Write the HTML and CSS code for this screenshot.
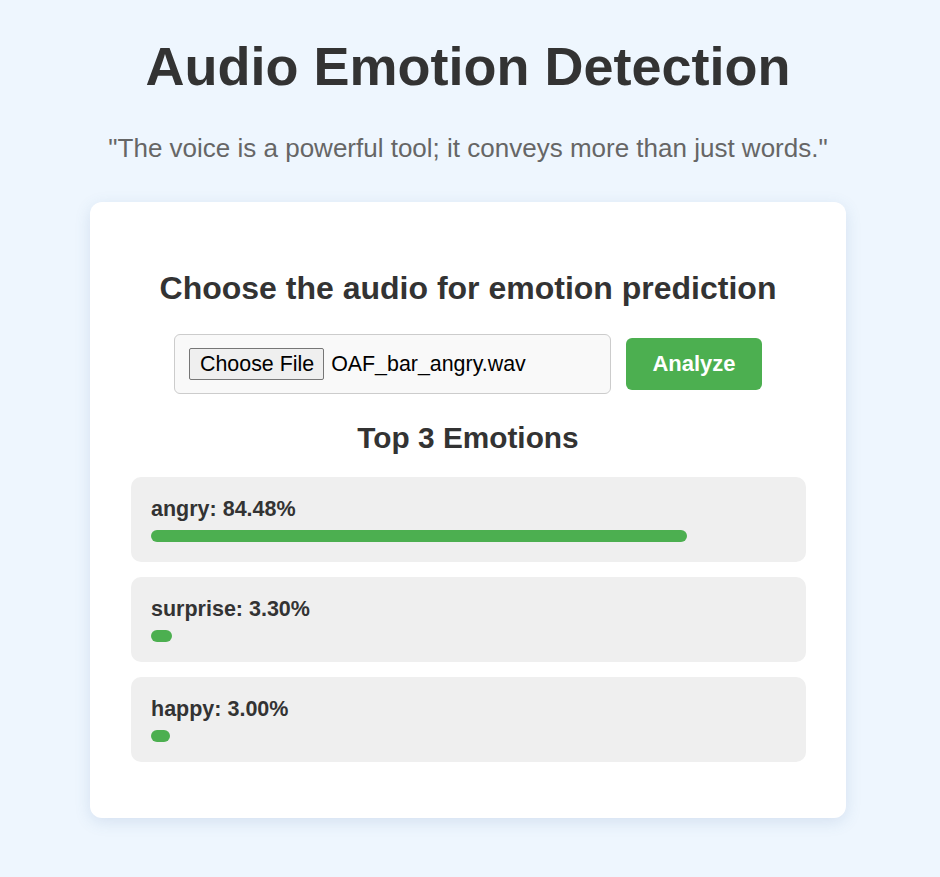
FILE: index.html
```html
<!DOCTYPE html>
<html lang="en">
<head>
<meta charset="utf-8">
<title>Audio Emotion Detection</title>
<link rel="stylesheet" href="styles.css">
</head>
<body>
  <h1 class="title">Audio Emotion Detection</h1>
  <p class="quote">"The voice is a powerful tool; it conveys more than just words."</p>
  <main class="card">
    <h2 class="card-heading">Choose the audio for emotion prediction</h2>
    <form class="upload-row">
      <div class="file-box">
        <span class="file-btn">Choose File</span>
        <span class="file-name">OAF_bar_angry.wav</span>
      </div>
      <button type="button" class="analyze-btn">Analyze</button>
    </form>
    <h3 class="results-heading">Top 3 Emotions</h3>
    <div class="results">
      <div class="emotion">
        <div class="emotion-label">angry: 84.48%</div>
        <div class="bar-track"><div class="bar" style="width:84.48%"></div></div>
      </div>
      <div class="emotion">
        <div class="emotion-label">surprise: 3.30%</div>
        <div class="bar-track"><div class="bar" style="width:3.30%"></div></div>
      </div>
      <div class="emotion">
        <div class="emotion-label">happy: 3.00%</div>
        <div class="bar-track"><div class="bar" style="width:3.00%"></div></div>
      </div>
    </div>
  </main>
</body>
</html>
```
FILE: styles.css
```css
* { box-sizing: border-box; }

body {
  margin: 0;
  padding: 0 94px 0 90px;
  background: #eef6fe;
  font-family: "Liberation Sans", Arial, sans-serif;
  color: #333;
  min-height: 877px;
}

.title {
  margin: 0;
  padding-top: 34px;
  font-size: 54px;
  font-weight: bold;
  text-align: center;
  color: #333;
  line-height: 64px;
}

.quote {
  margin: 35px 0 0;
  font-size: 26px;
  line-height: 30px;
  text-align: center;
  color: #666;
}

.card {
  margin-top: 39px;
  background: #fff;
  border-radius: 12px;
  box-shadow: 0 4px 16px rgba(70, 110, 160, 0.15);
  padding: 67px 40px 56px;
}

.card-heading {
  margin: 0;
  font-size: 32px;
  line-height: 38px;
  text-align: center;
}

.upload-row {
  margin: 27px 0 0;
  display: flex;
  justify-content: center;
  align-items: center;
  gap: 15px;
}

.file-box {
  width: 437px;
  height: 60px;
  border: 1px solid #ccc;
  border-radius: 6px;
  background: #f9f9f9;
  display: flex;
  align-items: center;
  padding: 0 14px;
  gap: 7px;
  font-size: 21.4px;
  color: #000;
}

.file-btn {
  display: inline-block;
  background: #efefef;
  border: 1px solid #767676;
  border-radius: 2px;
  padding: 3px 9px 3px 10px;
  font-size: 21.4px;
  line-height: 24px;
  color: #000;
}

.analyze-btn {
  width: 136px;
  height: 52px;
  border: none;
  border-radius: 6px;
  background: #4caf50;
  color: #fff;
  font-family: inherit;
  font-size: 22px;
  font-weight: bold;
}

.results-heading {
  margin: 27px 0 0;
  font-size: 29.8px;
  line-height: 34px;
  text-align: center;
}

.results {
  margin: 22px 0 0 1px;
  display: flex;
  flex-direction: column;
  gap: 15px;
}

.emotion {
  background: #efefef;
  border-radius: 10px;
  padding: 20px;
}

.emotion-label {
  font-size: 21.5px;
  font-weight: bold;
  line-height: 24px;
  margin-bottom: 9px;
}

.bar-track {
  height: 12px;
}

.bar {
  height: 12px;
  border-radius: 6px;
  background: #4caf50;
}
```
